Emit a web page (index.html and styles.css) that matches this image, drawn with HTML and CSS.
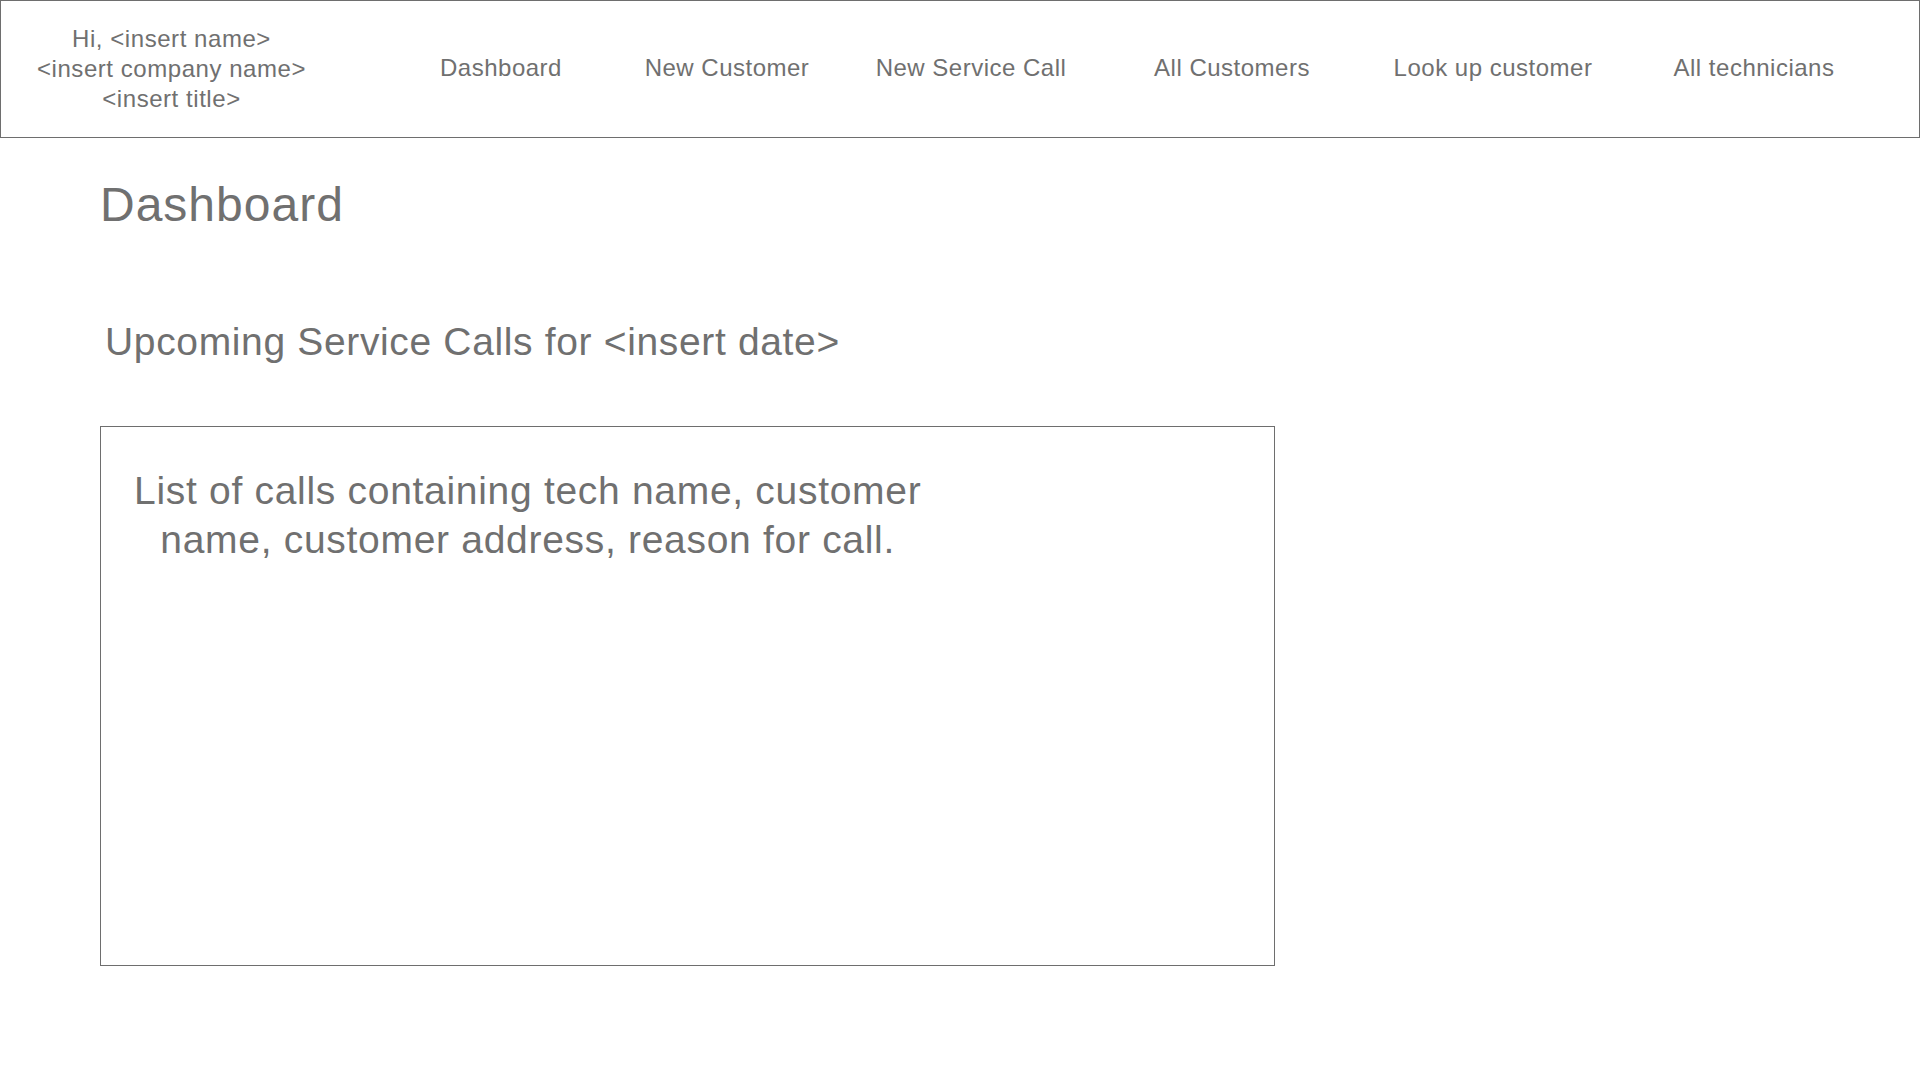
FILE: index.html
```html
<!DOCTYPE html>
<html lang="en">
<head>
<meta charset="utf-8">
<title>Dashboard</title>
<link rel="stylesheet" href="styles.css">
</head>
<body>
<header class="topbar">
  <div class="greeting">Hi, &lt;insert name&gt;<br>&lt;insert company name&gt;<br>&lt;insert title&gt;</div>
  <nav class="nav">
    <a class="nav-item">Dashboard</a>
    <a class="nav-item">New Customer</a>
    <a class="nav-item">New Service Call</a>
    <a class="nav-item">All Customers</a>
    <a class="nav-item">Look up customer</a>
    <a class="nav-item">All technicians</a>
  </nav>
</header>
<main class="content">
  <h1 class="page-title">Dashboard</h1>
  <h2 class="section-title">Upcoming Service Calls for &lt;insert date&gt;</h2>
  <section class="calls-box">
    <p class="calls-text">List of calls containing tech name, customer<br>name, customer address, reason for call.</p>
  </section>
</main>
</body>
</html>
```
FILE: styles.css
```css
html, body {
  margin: 0;
  padding: 0;
  background: #ffffff;
}

body {
  font-family: "Liberation Sans", Arial, Helvetica, sans-serif;
  color: #707070;
}

.topbar {
  box-sizing: border-box;
  width: 1920px;
  height: 138px;
  border: 1px solid #6e6e6e;
  display: flex;
  align-items: center;
}

.greeting {
  width: 341px;
  flex: none;
  text-align: center;
  font-size: 24px;
  line-height: 30px;
  letter-spacing: 0.55px;
  white-space: nowrap;
}

.nav {
  margin-left: 46px;
  padding-bottom: 2px;
  display: grid;
  grid-template-columns: 226px 226px 262px 260px 262px 260px;
  align-items: center;
}

.nav-item {
  text-align: center;
  font-size: 24px;
  line-height: 30px;
  letter-spacing: 0.5px;
  white-space: nowrap;
  color: #707070;
  text-decoration: none;
}

.content {
  padding-left: 100px;
}

.page-title {
  margin: 39px 0 0 0;
  font-weight: normal;
  font-size: 48px;
  line-height: 56px;
  letter-spacing: 1px;
}

.section-title {
  margin: 85px 0 0 5px;
  font-weight: normal;
  font-size: 39px;
  line-height: 48px;
  letter-spacing: 0.65px;
  white-space: nowrap;
}

.calls-box {
  box-sizing: border-box;
  margin-top: 60px;
  width: 1175px;
  height: 540px;
  border: 1px solid #6e6e6e;
  padding: 39px 0 0 33px;
}

.calls-text {
  display: inline-block;
  margin: 0;
  text-align: center;
  font-size: 39px;
  line-height: 49px;
  letter-spacing: 0.7px;
  white-space: nowrap;
}
```
